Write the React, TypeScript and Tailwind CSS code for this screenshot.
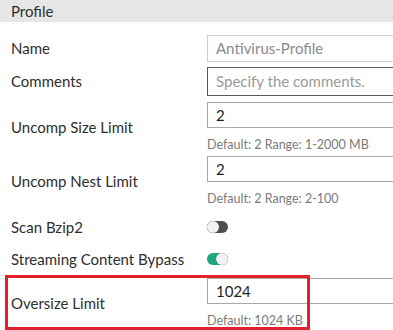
import React from "react";

type FieldRowProps = {
  label: string;
  children: React.ReactNode;
  className?: string;
};

function FieldRow({ label, children, className = "" }: FieldRowProps) {
  return (
    <div className={`flex items-center ${className}`}>
      <div className="w-[196px] shrink-0 text-[15px] text-[#2e2e2e]">{label}</div>
      <div className="min-w-0 flex-1">{children}</div>
    </div>
  );
}

function TextBox({
  value,
  placeholder,
  tone = "normal",
}: {
  value?: string;
  placeholder?: string;
  tone?: "normal" | "muted" | "focus";
}) {
  const border =
    tone === "muted"
      ? "border-[#cfcfcf] h-[27px]"
      : tone === "focus"
        ? "border-[#5a5a5a] h-[29px]"
        : "border-[#a9a9a9] h-[26px]";
  const text = value
    ? tone === "muted"
      ? "text-[#8a8a8a]"
      : "text-[#1e1e1e] text-[15.5px]"
    : "text-[#9a9a9a]";
  return (
    <div className={`flex w-[200px] items-center border border-r-0 pl-[8px] text-[15px] ${border} ${text}`}>
      {value ?? placeholder}
    </div>
  );
}

function Help({ children }: { children: React.ReactNode }) {
  return <div className="mt-[9px] text-[12.5px] leading-[16px] text-[#7a7a7a]">{children}</div>;
}

function Toggle({ on }: { on: boolean }) {
  return (
    <div
      className={`relative h-[12px] w-[21px] rounded-full ${on ? "bg-[#1ea57f]" : "bg-[#4f4f4f]"}`}
    >
      <div
        className={`absolute top-[0px] h-[12px] w-[12px] rounded-full bg-[#f2f2f2] shadow-[0_0_1px_rgba(0,0,0,0.4)] ${on ? "right-0" : "left-0"}`}
      />
    </div>
  );
}

export default function App() {
  return (
    <div
      className="relative h-[330px] w-[393px] overflow-hidden bg-white"
      style={{ fontFamily: "Lato, 'Open Sans', sans-serif" }}
    >
      <div className="flex h-[22px] items-center bg-[#e6e6e6] pl-[11px] text-[15px] text-[#2e2e2e]">
        Profile
      </div>

      <div className="pl-[11px]">
        <FieldRow label="Name" className="mt-[13px]">
          <TextBox value="Antivirus-Profile" tone="muted" />
        </FieldRow>
        <FieldRow label="Comments" className="mt-[5px]">
          <TextBox placeholder="Specify the comments." tone="focus" />
        </FieldRow>
        <FieldRow label="Uncomp Size Limit" className="mt-[6px]">
          <TextBox value="2" />
          <Help>Default: 2 Range: 1-2000 MB</Help>
        </FieldRow>
        <FieldRow label="Uncomp Nest Limit" className="mt-[3px]">
          <TextBox value="2" />
          <Help>Default: 2 Range: 2-100</Help>
        </FieldRow>
        <FieldRow label="Scan Bzip2" className="mt-[10px] h-[20px]">
          <Toggle on={false} />
        </FieldRow>
        <FieldRow label="Streaming Content Bypass" className="mt-[12px] h-[20px]">
          <Toggle on />
        </FieldRow>
        <FieldRow label="Oversize Limit" className="mt-[9px]">
          <TextBox value="1024" />
          <Help>Default: 1024 KB</Help>
        </FieldRow>
      </div>

      <div className="absolute left-[5px] top-[275px] h-[55px] w-[305px] border-[3px] border-[#e31f2b]" />
    </div>
  );
}
